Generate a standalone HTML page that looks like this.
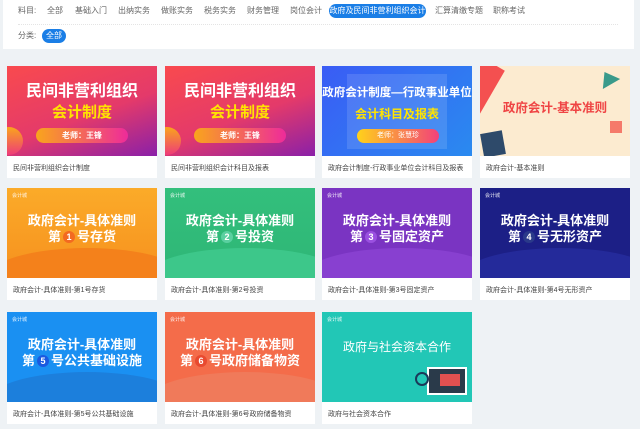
<!DOCTYPE html><html><head><meta charset="utf-8"><style>
*{margin:0;padding:0;box-sizing:border-box}
body{width:640px;height:429px;background:#eef2f5;font-family:"Liberation Sans","Noto Sans CJK SC",sans-serif;position:relative;overflow:hidden}
.top{position:absolute;left:3px;top:0;width:631px;height:49px;background:#fff}
.n{position:absolute;top:5px;font-size:8px;color:#666;line-height:12px}
.pill{position:absolute;background:#1a7ee6;color:#fff;border-radius:8px;font-size:8px;line-height:14px;text-align:center}
.dot{position:absolute;left:18px;top:24px;width:600px;border-top:1px dotted #e4e4e4}
.card{position:absolute;width:150px;height:112px;background:#fff}
.img{position:absolute;left:0;top:0;width:150px;height:90px;overflow:hidden;color:#fff;font-weight:bold;text-align:center}
.cap{position:absolute;left:6px;top:97px;font-size:7px;color:#444;white-space:nowrap}
.logo{position:absolute;left:5px;top:4px;font-size:5px;font-weight:normal;opacity:.9}
.t1{position:absolute;left:0;width:150px;top:25px;font-size:13px;line-height:16px}
.num{display:inline-block;width:12px;height:12px;border-radius:6px;font-size:9px;line-height:12px;margin:0 2px;vertical-align:1px}
.wave{position:absolute;left:-20px;width:200px;height:60px;border-radius:50%;}
</style></head><body>
<div class="top"></div>
<div class="n" style="left:18px">料目:</div>
<div class="n" style="left:47px">全部</div>
<div class="n" style="left:75px">基础入门</div>
<div class="n" style="left:118px">出纳实务</div>
<div class="n" style="left:161px">做账实务</div>
<div class="n" style="left:204px">税务实务</div>
<div class="n" style="left:247px">财务管理</div>
<div class="n" style="left:290px">岗位会计</div>
<div class="pill" style="left:329px;top:4px;width:97px">政府及民间非营利组织会计</div>
<div class="n" style="left:435px">汇算清缴专题</div>
<div class="n" style="left:493px">职称考试</div>
<div class="dot"></div>
<div class="n" style="left:18px;top:30px">分类:</div>
<div class="pill" style="left:42px;top:29px;width:24px">全部</div>

<!-- row1 -->
<div class="card" style="left:7px;top:66px"><div class="img" style="background:linear-gradient(160deg,#f94a4e,#e43a6a 55%,#8a20a8)">
<div style="position:absolute;top:16px;width:150px;font-size:16px;line-height:20px">民间非营利组织</div>
<div style="position:absolute;top:37px;width:150px;font-size:15px;line-height:19px;color:#ffe400">会计制度</div>
<div style="position:absolute;left:29px;top:62px;width:92px;height:15px;border-radius:8px;background:linear-gradient(90deg,#f9a51c,#ee2b9a);font-size:8px;line-height:15px">老师：王锋</div>
<div style="position:absolute;left:-12px;top:61px;width:28px;height:28px;border-radius:50%;background:linear-gradient(#f9a51c,#ee3b7a)"></div>
</div><div class="cap">民间非营利组织会计制度</div></div>
<div class="card" style="left:165px;top:66px"><div class="img" style="background:linear-gradient(160deg,#f94a4e,#e43a6a 55%,#8a20a8)">
<div style="position:absolute;top:16px;width:150px;font-size:16px;line-height:20px">民间非营利组织</div>
<div style="position:absolute;top:37px;width:150px;font-size:15px;line-height:19px;color:#ffe400">会计制度</div>
<div style="position:absolute;left:29px;top:62px;width:92px;height:15px;border-radius:8px;background:linear-gradient(90deg,#f9a51c,#ee2b9a);font-size:8px;line-height:15px">老师：王锋</div>
<div style="position:absolute;left:-12px;top:61px;width:28px;height:28px;border-radius:50%;background:linear-gradient(#f9a51c,#ee3b7a)"></div>
</div><div class="cap">民间非营利组织会计科目及报表</div></div>
<div class="card" style="left:322px;top:66px"><div class="img" style="background:linear-gradient(135deg,#3a5cf5,#2a8af0)">
<div style="position:absolute;left:25px;top:8px;width:100px;height:75px;background:rgba(255,255,255,.12)"></div>
<div style="position:absolute;top:19px;width:150px;font-size:11.5px;line-height:16px">政府会计制度—行政事业单位</div>
<div style="position:absolute;top:40px;width:150px;font-size:12px;line-height:16px;color:#ffe400">会计科目及报表</div>
<div style="position:absolute;left:35px;top:63px;width:82px;height:14px;border-radius:7px;background:linear-gradient(90deg,#ffd21a,#f2417a);font-size:7px;line-height:14px;font-weight:normal">老师：张慧珍</div>
</div><div class="cap">政府会计制度-行政事业单位会计科目及报表</div></div>
<div class="card" style="left:480px;top:66px"><div class="img" style="background:#fcebd0">
<div style="position:absolute;left:-30px;top:-10px;width:40px;height:70px;background:#f45050;transform:rotate(30deg)"></div>
<div style="position:absolute;top:34px;width:150px;font-size:12.5px;line-height:16px;color:#ef4444">政府会计-基本准则</div>
<div style="position:absolute;left:2px;top:66px;width:22px;height:24px;background:#2e4a6a;transform:rotate(-10deg)"></div>
<div style="position:absolute;left:130px;top:55px;width:12px;height:12px;background:#f57a6a"></div>
<div style="position:absolute;left:118px;top:5px;width:0;height:0;border-left:10px solid transparent;border-right:10px solid transparent;border-bottom:14px solid #3a9a8a;transform:rotate(-30deg)"></div>
</div><div class="cap">政府会计-基本准则</div></div>

<!-- row2 -->
<div class="card" style="left:7px;top:188px"><div class="img" style="background:linear-gradient(#fbab29,#f6901e)">
<div class="wave" style="top:60px;background:#f4811b"></div>
<div class="logo">会计城</div><div class="t1">政府会计-具体准则<br>第<span class="num" style="background:#f36a20">1</span>号存货</div>
</div><div class="cap">政府会计-具体准则-第1号存货</div></div>
<div class="card" style="left:165px;top:188px"><div class="img" style="background:linear-gradient(#33bf7c,#2eb676)">
<div class="wave" style="top:60px;background:#3dc78a"></div>
<div class="logo">会计城</div><div class="t1">政府会计-具体准则<br>第<span class="num" style="background:#5ad0a0">2</span>号投资</div>
</div><div class="cap">政府会计-具体准则-第2号投资</div></div>
<div class="card" style="left:322px;top:188px"><div class="img" style="background:#7a34c2">
<div class="wave" style="top:60px;background:#8840d0"></div>
<div class="logo">会计城</div><div class="t1">政府会计-具体准则<br>第<span class="num" style="background:#9a50e0">3</span>号固定资产</div>
</div><div class="cap">政府会计-具体准则-第3号固定资产</div></div>
<div class="card" style="left:480px;top:188px"><div class="img" style="background:#1c1f86">
<div class="wave" style="top:60px;background:#242a9a"></div>
<div class="logo">会计城</div><div class="t1">政府会计-具体准则<br>第<span class="num" style="background:#2a3a8a">4</span>号无形资产</div>
</div><div class="cap">政府会计-具体准则-第4号无形资产</div></div>

<!-- row3 -->
<div class="card" style="left:7px;top:312px"><div class="img" style="background:#1a90f2">
<div class="wave" style="top:60px;background:#1c7fdc"></div>
<div class="logo">会计城</div><div class="t1">政府会计-具体准则<br>第<span class="num" style="background:#1a5ae0">5</span>号公共基础设施</div>
</div><div class="cap">政府会计-具体准则-第5号公共基础设施</div></div>
<div class="card" style="left:165px;top:312px"><div class="img" style="background:#f46c4a">
<div class="wave" style="top:60px;background:#f07a5a"></div>
<div class="logo">会计城</div><div class="t1">政府会计-具体准则<br>第<span class="num" style="background:#e84a30">6</span>号政府储备物资</div>
</div><div class="cap">政府会计-具体准则-第6号政府储备物资</div></div>
<div class="card" style="left:322px;top:312px"><div class="img" style="background:#22c7b6">
<div class="logo">会计城</div><div style="position:absolute;top:27px;width:150px;font-size:12px;line-height:16px;font-weight:normal">政府与社会资本合作</div>
<div style="position:absolute;left:105px;top:55px;width:40px;height:28px;background:#2a3a4a;border:2px solid #fff"></div>
<div style="position:absolute;left:118px;top:62px;width:20px;height:12px;background:#e05050"></div>
<div style="position:absolute;left:93px;top:60px;width:14px;height:14px;border-radius:50%;border:2px solid #1a3a5a"></div>
</div><div class="cap">政府与社会资本合作</div></div>
</body></html>
